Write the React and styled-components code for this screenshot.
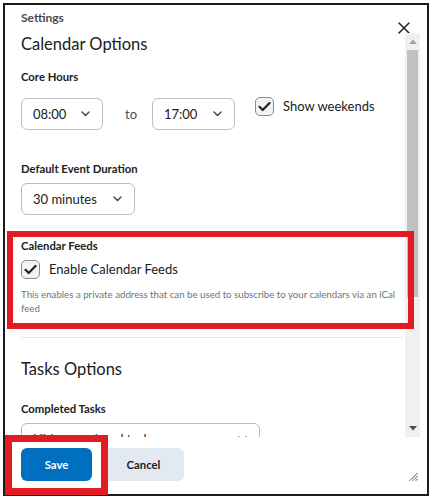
import React from 'react';
import styled, { createGlobalStyle } from 'styled-components';

const GlobalStyle = createGlobalStyle`
  html, body {
    margin: 0;
    padding: 0;
    background: #fff;
  }
  body {
    font-family: Lato, "Noto Sans", sans-serif;
    color: #202122;
  }
`;

function Chevron() {
    return (
        <svg width="9" height="6" viewBox="0 0 9 6">
            <path d="M1 1l3.5 3.5L8 1" fill="none" stroke="#494c4e" strokeWidth="1.5" strokeLinecap="round" strokeLinejoin="round" />
        </svg>
    );
}

function Check() {
    return (
        <svg width="13" height="11" viewBox="0 0 13 11">
            <path d="M1.5 5.8l3.2 3.2L11.5 2" fill="none" stroke="#202122" strokeWidth="2.2" strokeLinecap="round" strokeLinejoin="round" />
        </svg>
    );
}

function Select({ value, width }) {
    return (
        <SelectBox $width={width}>
            <span>{value}</span>
            <Chevron />
        </SelectBox>
    );
}

function App() {
    return (
        <>
            <GlobalStyle />
            <Frame>
                <Header>
                    <Title>Settings</Title>
                    <Close width="12" height="12" viewBox="0 0 12 12">
                        <path d="M1 1l10 10M11 1L1 11" stroke="#202122" strokeWidth="1.5" strokeLinecap="round" />
                    </Close>
                </Header>
                <ScrollArea>
                    <Content>
                        <Heading $top={1}>Calendar Options</Heading>
                        <Label $top={14}>Core Hours</Label>
                        <Row $top={12}>
                            <Select value="08:00" width={82} />
                            <To>to</To>
                            <Select value="17:00" width={83} />
                            <CheckRow $inline>
                                <CheckBox><Check /></CheckBox>
                                <CheckText>Show weekends</CheckText>
                            </CheckRow>
                        </Row>
                        <Label $top={30}>Default Event Duration</Label>
                        <Row $top={5}>
                            <Select value="30 minutes" width={114} />
                        </Row>
                        <Label $top={22}>Calendar Feeds</Label>
                        <CheckRow>
                            <CheckBox><Check /></CheckBox>
                            <CheckText>Enable Calendar Feeds</CheckText>
                        </CheckRow>
                        <Help>This enables a private address that can be used to subscribe to your calendars via an iCal feed</Help>
                        <Divider />
                        <Heading $top={21}>Tasks Options</Heading>
                        <Label $top={21}>Completed Tasks</Label>
                        <Row $top={5}>
                            <Select value="Hide completed tasks" width={239} />
                        </Row>
                    </Content>
                    <Scrollbar>
                        <ArrowBtn>
                            <svg width="8" height="5" viewBox="0 0 8 5"><path d="M0 5L4 0.5L8 5z" fill="#a3a3a3" /></svg>
                        </ArrowBtn>
                        <Thumb />
                        <Track />
                        <ArrowBtn>
                            <svg width="8" height="5" viewBox="0 0 8 5"><path d="M0 0L4 4.5L8 0z" fill="#505050" /></svg>
                        </ArrowBtn>
                    </Scrollbar>
                </ScrollArea>
                <Footer>
                    <Button $primary>Save</Button>
                    <Button>Cancel</Button>
                </Footer>
                <Grip width="9" height="9" viewBox="0 0 9 9">
                    <path d="M1 8.5L8.5 1M4 8.5L8.5 4M7 8.5L8.5 7" stroke="#555" strokeWidth="1" strokeLinecap="round" />
                </Grip>
                <Highlight $left={2} $top={226} $width={407} $height={98} $border={6} />
                <Highlight $left={0} $top={430} $width={103} $height={60} $border={7} />
            </Frame>
        </>
    );
}

const Frame = styled.div`
    position: relative;
    box-sizing: border-box;
    margin: 3px 0 0 3px;
    width: 426px;
    height: 493px;
    border: 2px solid #1c1c1c;
    display: flex;
    flex-direction: column;
    background: #fff;
`
const Header = styled.div`
    height: 28px;
    flex-shrink: 0;
    display: flex;
    justify-content: space-between;
    align-items: flex-start;
    padding: 5px 17px 0 16px;
    box-sizing: border-box;
`
const Title = styled.div`
    font-size: 12px;
    line-height: 16px;
    font-weight: 700;
    color: #494c4e;
`
const Close = styled.svg`
    margin-top: 12px;
`
const ScrollArea = styled.div`
    height: 404px;
    flex-shrink: 0;
    display: flex;
    padding-right: 7px;
`
const Content = styled.div`
    flex: 1;
    overflow: hidden;
    padding: 0 2px 0 16px;
`
const Heading = styled.h2`
    margin: ${p => p.$top || 0}px 0 0;
    font-size: 16.5px;
    line-height: 20px;
    font-weight: 400;
    color: #202122;
`
const Label = styled.div`
    margin-top: ${p => p.$top}px;
    font-size: 11.3px;
    line-height: 18px;
    font-weight: 700;
    color: #202122;
`
const Row = styled.div`
    margin-top: ${p => p.$top}px;
    display: flex;
    align-items: flex-start;
`
const SelectBox = styled.div`
    box-sizing: border-box;
    width: ${p => p.$width}px;
    height: 32px;
    border: 1px solid #b9bec3;
    border-radius: 6px;
    background: #fff;
    display: flex;
    align-items: center;
    justify-content: space-between;
    padding: 0 12px 0 11px;
    font-size: 13px;
    color: #202122;
    flex-shrink: 0;
`
const To = styled.span`
    margin: 0 15px 0 22px;
    line-height: 32px;
    font-size: 13px;
    color: #494c4e;
`
const CheckRow = styled.div`
    display: flex;
    align-items: center;
    gap: 9px;
    margin: ${p => (p.$inline ? '-1px 0 0 20px' : '5px 0 0')};
`
const CheckBox = styled.div`
    box-sizing: border-box;
    width: 19px;
    height: 19px;
    border: 1px solid #868c8f;
    border-radius: 5px;
    background: #f1f3f5;
    display: flex;
    align-items: center;
    justify-content: center;
`
const CheckText = styled.span`
    font-size: 13px;
    line-height: 19px;
    color: #202122;
`
const Help = styled.p`
    margin: 8px 0 0;
    max-width: 380px;
    font-size: 9.7px;
    line-height: 14px;
    color: #6e7376;
`
const Divider = styled.div`
    margin-top: 22px;
    height: 1px;
    background: #e3e7ec;
`
const Scrollbar = styled.div`
    width: 15px;
    background: #f0f0f0;
    display: flex;
    flex-direction: column;
    flex-shrink: 0;
`
const ArrowBtn = styled.div`
    height: 17px;
    display: flex;
    align-items: center;
    justify-content: center;
`
const Thumb = styled.div`
    height: 247px;
    margin: 0 2px;
    background: #c1c1c1;
`
const Track = styled.div`
    flex: 1;
`
const Footer = styled.div`
    flex: 1;
    display: flex;
    gap: 11px;
    padding: 11px 16px 0;
`
const Button = styled.div`
    box-sizing: border-box;
    width: ${p => (p.$primary ? 71 : 81)}px;
    height: 33px;
    border-radius: 6px;
    display: flex;
    align-items: center;
    justify-content: center;
    font-size: 11.3px;
    font-weight: 700;
    color: ${p => (p.$primary ? '#fff' : '#202122')};
    background: ${p => (p.$primary ? '#006fbf' : '#e3e9f1')};
`
const Grip = styled.svg`
    position: absolute;
    right: 9px;
    bottom: 13px;
`
const Highlight = styled.div`
    position: absolute;
    box-sizing: border-box;
    left: ${p => p.$left}px;
    top: ${p => p.$top}px;
    width: ${p => p.$width}px;
    height: ${p => p.$height}px;
    border: ${p => p.$border}px solid #e31b23;
    pointer-events: none;
`

export default App;
